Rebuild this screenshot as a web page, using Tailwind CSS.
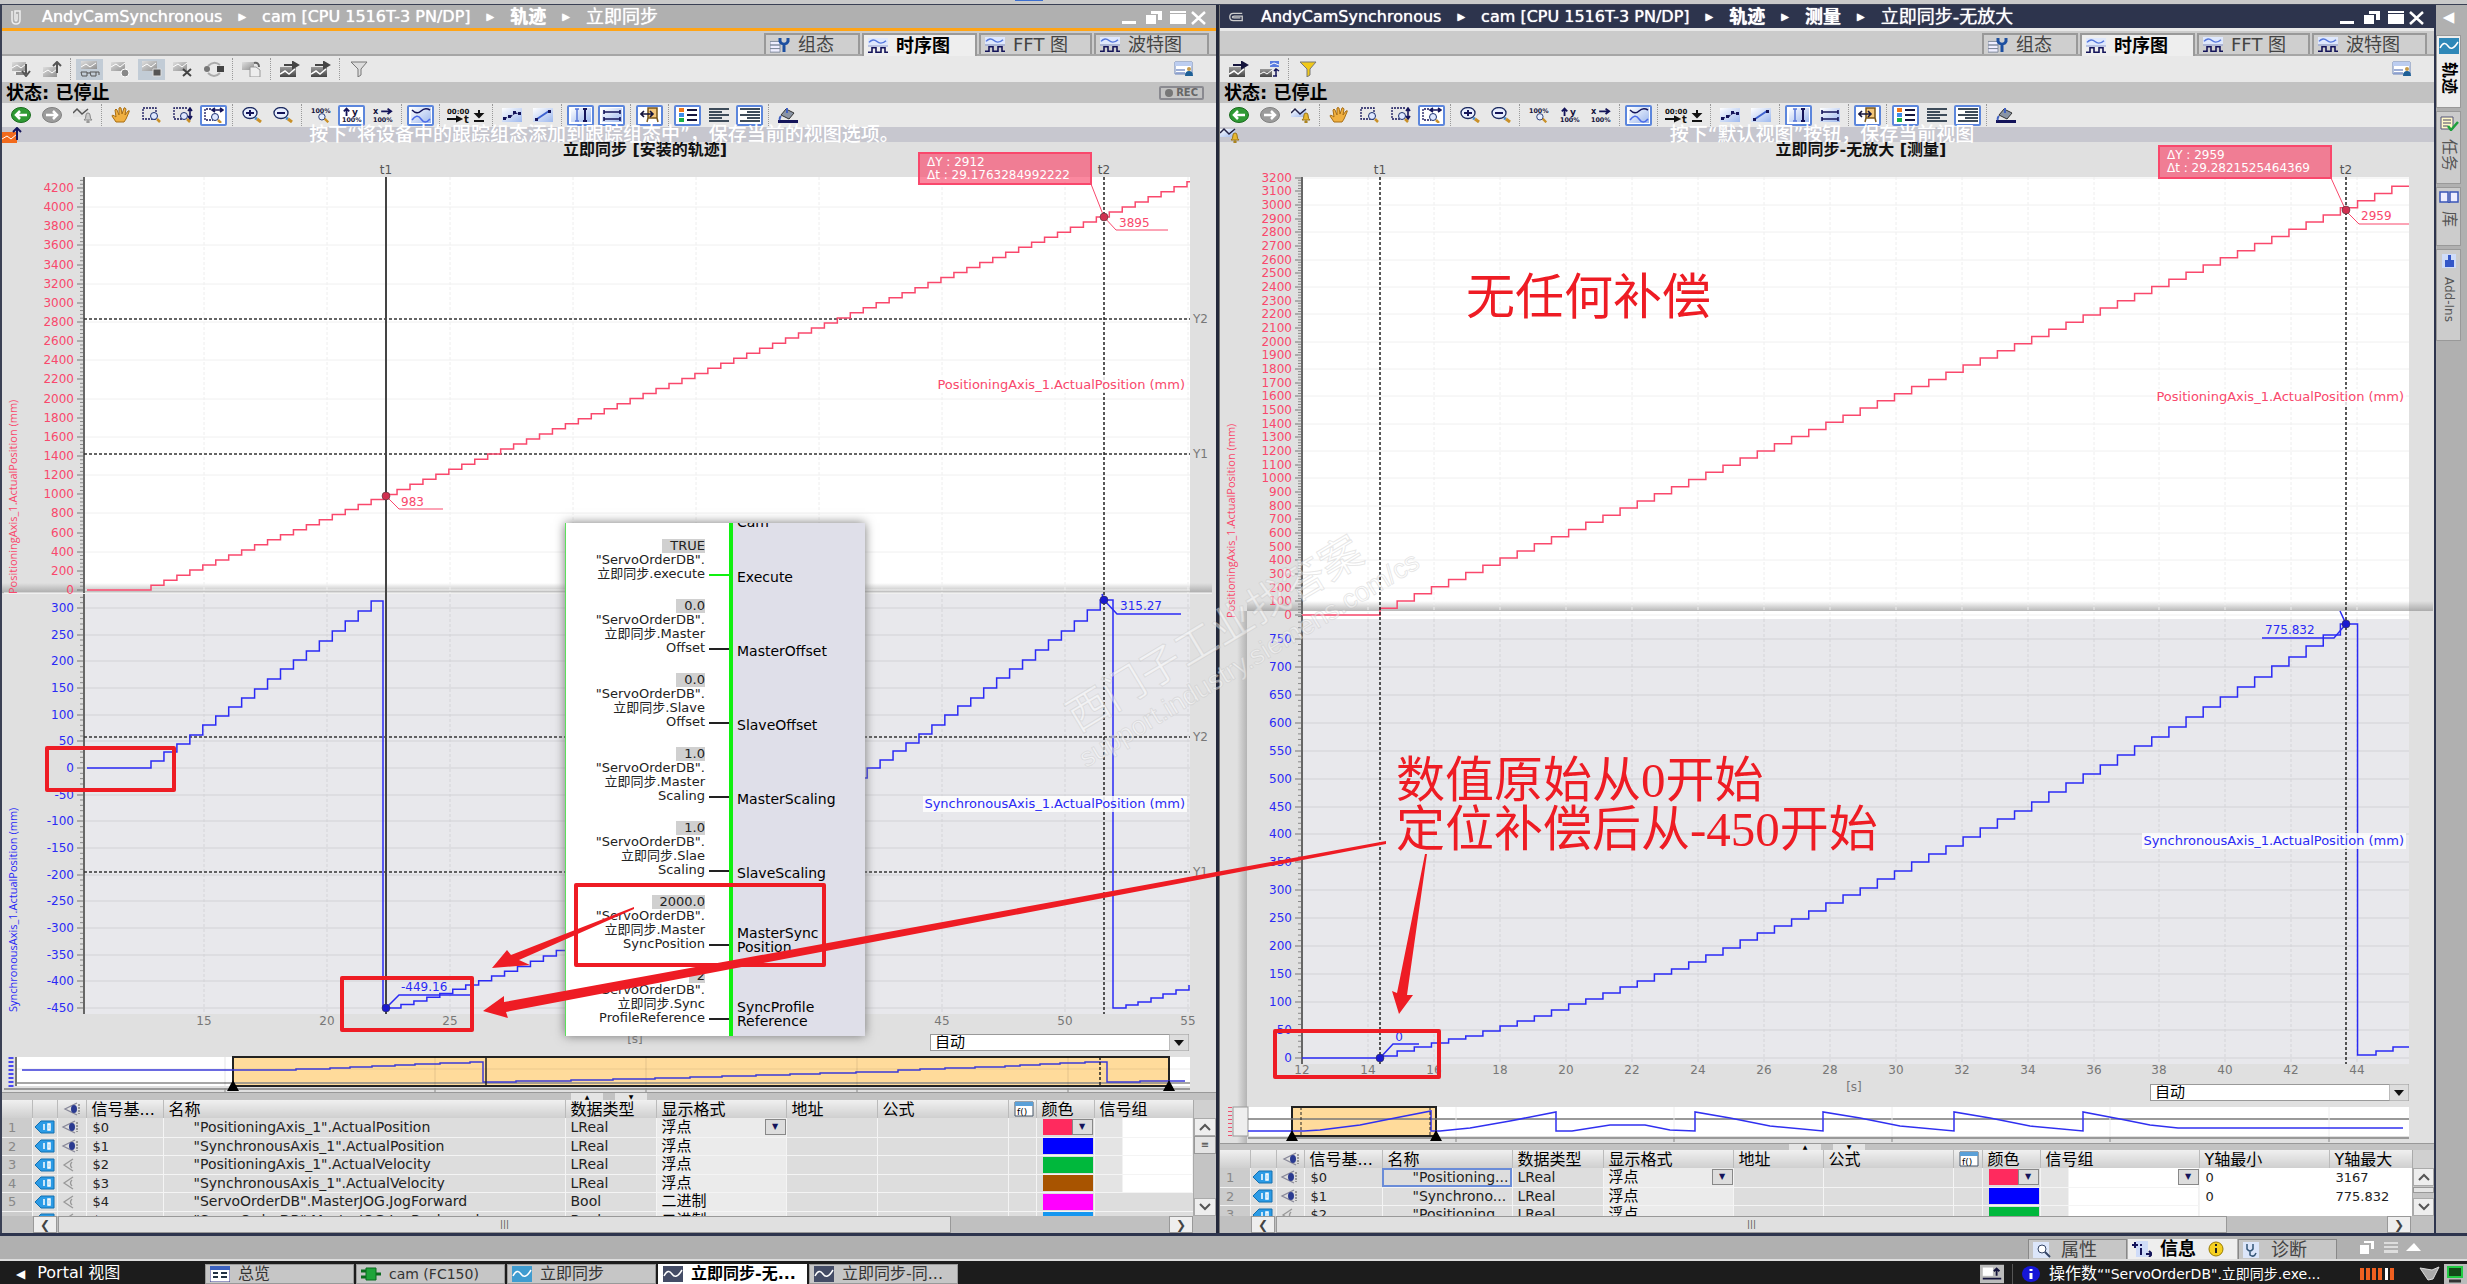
<!DOCTYPE html>
<html lang="zh-CN">
<head>
    <meta charset="UTF-8">
    <meta name="viewport" content="width=device-width, initial-scale=1.0">
    <title>立即同步 - 轨迹</title>
    <script src="https://cdn.jsdelivr.net/npm/@tailwindcss/browser@4"></script>
</head>
<body class="relative bg-[#b0b0b0] font-['DejaVu_Sans','Noto_Sans_CJK_SC',sans-serif] text-xs text-[#222] overflow-x-hidden">

    <!-- Icons -->
    <svg class="absolute w-0 h-0">
        <defs>
            <linearGradient id="gBlue" x1="0" y1="0" x2="1" y2="1"><stop offset="0" stop-color="#fff"/><stop offset="1" stop-color="#9db8ee"/></linearGradient>
            <linearGradient id="gGray" x1="0" y1="0" x2="1" y2="1"><stop offset="0" stop-color="#dedede"/><stop offset="1" stop-color="#909090"/></linearGradient>
            <linearGradient id="gDark" x1="0" y1="0" x2="0" y2="1"><stop offset="0" stop-color="#999"/><stop offset="1" stop-color="#444"/></linearGradient>
            <linearGradient id="gShade" x1="0" y1="0" x2="0" y2="1"><stop offset="0" stop-color="#888" stop-opacity="0"/><stop offset="1" stop-color="#888" stop-opacity=".6"/></linearGradient>
            <linearGradient id="gShadeX" x1="0" y1="0" x2="1" y2="0"><stop offset="0" stop-color="#888" stop-opacity="0"/><stop offset="1" stop-color="#888" stop-opacity=".5"/></linearGradient>
        </defs>
        <symbol id="i-down" viewBox="0 0 20 16" preserveAspectRatio="none"><path d="M1 1h14v9H1z" fill="url(#gGray)"/><path d="M1 7l5-3 4 3 5-4M3 12h10" stroke="#fff" fill="none"/><path d="M5 11h9v3H5z" fill="#888"/><path d="M15 3v10M11 10l4 5 4-5" stroke="#555" stroke-width="2" fill="none"/></symbol>
        <symbol id="i-up" viewBox="0 0 20 16" preserveAspectRatio="none"><path d="M1 6h14v10H1z" fill="url(#gGray)"/><path d="M1 12l5-3 4 3 5-4" stroke="#fff" fill="none"/><path d="M15 12V2M11 5l4-4 4 4" stroke="#555" stroke-width="2" fill="none"/></symbol>
        <symbol id="i-glasses" viewBox="0 0 20 16" preserveAspectRatio="none"><path d="M1 0h16v8H1z" fill="url(#gGray)"/><path d="M1 6l5-3 4 3 6-4" stroke="#fff" fill="none"/><path d="M1 11h6v4H2zM10 11h6v4h-5zM7 12h3M16 11h3v3" stroke="#555" fill="none"/></symbol>
        <symbol id="i-rec" viewBox="0 0 20 16" preserveAspectRatio="none"><path d="M0 1h14v9H0z" fill="url(#gGray)"/><path d="M0 6l5-3 4 3 5-4" stroke="#fff" fill="none"/><circle cx="14" cy="12" r="4" fill="#888" stroke="#fff"/></symbol>
        <symbol id="i-stop" viewBox="0 0 20 16" preserveAspectRatio="none"><path d="M0 0h15v10H0z" fill="url(#gGray)"/><path d="M0 6l5-3 4 3 5-4" stroke="#fff" fill="none"/><path d="M11 8h8v7h-8z" fill="#555" stroke="#ddd"/></symbol>
        <symbol id="i-del" viewBox="0 0 20 16" preserveAspectRatio="none"><path d="M0 1h14v9H0z" fill="url(#gGray)"/><path d="M0 6l5-3 4 3 5-4" stroke="#fff" fill="none"/><path d="M10 8l8 7M18 8l-8 7" stroke="#444" stroke-width="2"/></symbol>
        <symbol id="i-loop" viewBox="0 0 20 16" preserveAspectRatio="none"><path d="M4 5q6-6 12-1M16 12q-6 6-12 0" stroke="#aaa" stroke-width="2" fill="none"/><circle cx="3" cy="8" r="3" fill="#777"/><path d="M13 5h7v6h-7z" fill="#444"/></symbol>
        <symbol id="i-copy" viewBox="0 0 20 16" preserveAspectRatio="none"><path d="M0 1h12v8H0z" fill="url(#gGray)"/><path d="M8 6h6l4 3v7H8z" fill="#eee" stroke="#999"/><path d="M12 2q5-1 5 4" stroke="#666" stroke-width="2" fill="none"/></symbol>
        <symbol id="i-send" viewBox="0 0 20 16" preserveAspectRatio="none"><path d="M0 6h16v10H0z" fill="url(#gDark)"/><path d="M0 13l5-3 4 3 6-5" stroke="#fff" stroke-width="1.500" fill="none"/><path d="M4 4h11M13 1l5 3-5 3z" stroke="currentColor" stroke-width="2" fill="currentColor"/></symbol>
        <symbol id="i-swap" viewBox="0 0 20 16" preserveAspectRatio="none"><path d="M10 0h9v6h-9z" fill="#5a7be0"/><path d="M10 4l4-2 5 2" stroke="#fff" fill="none"/><path d="M0 8h12v8H0z" fill="url(#gDark)"/><path d="M0 13l4-2 3 2 5-4" stroke="#fff" fill="none"/><path d="M16 8v7M13 15h4M14 10l2-2 3 2" stroke="#14145a" stroke-width="1.500" fill="none"/></symbol>
        <symbol id="i-funnel" viewBox="0 0 20 16" preserveAspectRatio="none"><path d="M2 1h16l-6 7v6l-3 2V8z" fill="currentColor" stroke="#777"/></symbol>
        <symbol id="i-view" viewBox="0 0 20 16" preserveAspectRatio="none"><path d="M1 1h17v12H1z" fill="#fff" stroke="#6a84b8"/><path d="M1 1h17v4H1z" fill="#bccdf0"/><path d="M2 9h9M2 12h9" stroke="#7d94c9" stroke-width="1.500"/><circle cx="15" cy="8" r="2" fill="#c59a4a"/><path d="M11 15q0-5 4-5t4 5z" fill="#1e5f96"/></symbol>
        <symbol id="i-back" viewBox="0 0 20 16" preserveAspectRatio="none"><ellipse cx="10" cy="8" rx="9.500" ry="7.500" fill="#2f9a34" stroke="#1a6b1e"/><path d="M16 8H6M9 4L5 8l4 4" stroke="#fff" stroke-width="2.500" fill="none"/></symbol>
        <symbol id="i-fwd" viewBox="0 0 20 16" preserveAspectRatio="none"><ellipse cx="10" cy="8" rx="9.500" ry="7.500" fill="#9c9c9c" stroke="#808080"/><path d="M4 8h10M11 4l4 4-4 4" stroke="#fff" stroke-width="2.500" fill="none"/></symbol>
        <symbol id="i-bell" viewBox="0 0 20 16" preserveAspectRatio="none"><path d="M0 2h15v8H0z" fill="url(#gBlue)"/><path d="M0 6l4-4 5 5 6-5" stroke="#224" stroke-width="1.500" fill="none"/><path d="M11 13q2-1 2-5 0-2 2-2t2 2q0 4 2 5zM14 14h2v2h-2z" fill="#e8b830" stroke="#9a7416"/></symbol>
        <symbol id="i-bellg" viewBox="0 0 20 16" preserveAspectRatio="none"><path d="M0 2h15v8H0z" fill="#e2e2e2"/><path d="M0 6l4-4 5 5 6-5" stroke="#555" stroke-width="1.500" fill="none"/><path d="M11 13q2-1 2-5 0-2 2-2t2 2q0 4 2 5zM14 14h2v2h-2z" fill="#ccc" stroke="#888"/></symbol>
        <symbol id="i-hand" viewBox="0 0 20 16" preserveAspectRatio="none"><path d="M5 15L1 9q0-2 4 1L4 3q1-2 2 0l2 5V1q1-1 2 0l1 6 2-6q1-1 2 1l-1 6 3-4q2-1 1 1l-3 7-2 3z" fill="#f0b040" stroke="#a86e14"/></symbol>
        <symbol id="i-zsel" viewBox="0 0 20 16" preserveAspectRatio="none"><path d="M1 1h13v11H1z" fill="none" stroke="#14145a" stroke-width="1.300" stroke-dasharray="2 1"/><circle cx="12" cy="9" r="3.500" fill="#dfe8ff" stroke="#1c3070"/><path d="M15 12l3 3" stroke="#c99028" stroke-width="2.500"/></symbol>
        <symbol id="i-zy" viewBox="0 0 20 16" preserveAspectRatio="none"><path d="M14 1H1v11h9" fill="none" stroke="#14145a" stroke-width="1.300" stroke-dasharray="2 1"/><path d="M17 2v9M15 4l2-3 2 3M15 9l2 3 2-3" stroke="#14145a" stroke-width="1.600" fill="none"/><circle cx="11" cy="9" r="3.500" fill="#dfe8ff" stroke="#1c3070"/><path d="M14 12l3 3" stroke="#c99028" stroke-width="2.500"/></symbol>
        <symbol id="i-zx" viewBox="0 0 20 16" preserveAspectRatio="none"><path d="M7 2H1v11h8" fill="none" stroke="#14145a" stroke-width="1.300" stroke-dasharray="2 1"/><path d="M9 3h9M11 1L8 3l3 2M16 1l3 2-3 2" stroke="#14145a" stroke-width="1.600" fill="none"/><circle cx="11" cy="10" r="3.500" fill="#dfe8ff" stroke="#1c3070"/><path d="M14 13l3 3" stroke="#c99028" stroke-width="2.500"/></symbol>
        <symbol id="i-zin" viewBox="0 0 20 16" preserveAspectRatio="none"><ellipse cx="8" cy="6" rx="7" ry="5.500" fill="#e8efff" stroke="#1c2a60" stroke-width="1.300"/><path d="M4 6h8M8 3v6" stroke="#14145a" stroke-width="2"/><path d="M13 11l2 1" stroke="#4c8fd0" stroke-width="3"/><path d="M15 12l4 3" stroke="#c99028" stroke-width="3"/></symbol>
        <symbol id="i-zout" viewBox="0 0 20 16" preserveAspectRatio="none"><ellipse cx="8" cy="6" rx="7" ry="5.500" fill="#e8efff" stroke="#1c2a60" stroke-width="1.300"/><path d="M4 6h8" stroke="#14145a" stroke-width="2"/><path d="M13 11l2 1" stroke="#4c8fd0" stroke-width="3"/><path d="M15 12l4 3" stroke="#c99028" stroke-width="3"/></symbol>
        <symbol id="i-z100" viewBox="0 0 22 16"><text x="0" y="6" font-size="7" font-weight="bold" fill="#14143c">100%</text><circle cx="12" cy="10" r="3.500" fill="#e8efff" stroke="#1c3070"/><path d="M15 12l4 4" stroke="#c99028" stroke-width="2.500"/></symbol>
        <symbol id="i-y100" viewBox="0 0 22 16"><path d="M5 9V1M2 4l3-3 3 3" stroke="#14145a" stroke-width="2" fill="none"/><text x="11" y="8" font-size="10" font-weight="bold" fill="#14143c">y</text><text x="0" y="16" font-size="7" font-weight="bold" fill="#14143c">100%</text></symbol>
        <symbol id="i-x100" viewBox="0 0 22 16"><path d="M9 4h10M16 1l4 3-4 3" stroke="#14145a" stroke-width="2" fill="none"/><text x="0" y="7" font-size="9" font-weight="bold" fill="#14143c">x</text><text x="0" y="16" font-size="7" font-weight="bold" fill="#14143c">100%</text></symbol>
        <symbol id="i-wave" viewBox="0 0 20 16" preserveAspectRatio="none"><path d="M0 0h20v16H0z" fill="url(#gBlue)"/><path d="M1 3q5 5 9 1t9-1" stroke="#14145a" stroke-width="1.500" fill="none"/><path d="M1 13q5-7 9-1t9 0" stroke="#4a6ae8" stroke-width="1.500" fill="none"/></symbol>
        <symbol id="i-time" viewBox="0 0 40 16"><text x="1" y="7" font-size="7" font-weight="bold" fill="#111">00:00</text><path d="M1 12h12M11 10l4 2-4 2z" stroke="#111" stroke-width="2"/><text x="18" y="16" font-size="10" font-weight="bold" fill="#111">t</text><path d="M33 3v5M30 7h6l-3 3zM28 14h10" stroke="#111" stroke-width="2"/></symbol>
        <symbol id="i-dots" viewBox="0 0 20 16" preserveAspectRatio="none"><path d="M0 1h20v14H0z" fill="url(#gBlue)"/><path d="M3 11l5-1 5-4 5 1" stroke="#14145a" stroke-width="1.200" fill="none" stroke-dasharray="2 1"/><path d="M1 10h3v3H1zM6 8h3v3H6zM11 4h3v3h-3zM16 5h3v3h-3z" fill="#14145a"/></symbol>
        <symbol id="i-line" viewBox="0 0 20 16" preserveAspectRatio="none"><path d="M0 1h20v14H0z" fill="url(#gBlue)"/><path d="M4 12l12-8" stroke="#3d62d0" stroke-width="2"/><path d="M2 11h3v3H2zM15 3h3v3h-3z" fill="#14145a"/></symbol>
        <symbol id="i-vcur" viewBox="0 0 20 16" preserveAspectRatio="none"><path d="M0 1h20v14H0z" fill="url(#gBlue)"/><path d="M6 2v12M4 2h4M4 14h4" stroke="#5a78d8" stroke-width="1.500"/><path d="M14 2v12M12 2h4M12 14h4" stroke="#14145a" stroke-width="2"/></symbol>
        <symbol id="i-hcur" viewBox="0 0 20 16" preserveAspectRatio="none"><path d="M0 1h20v14H0z" fill="url(#gBlue)"/><path d="M2 5h16M2 3v4M18 3v4M2 12h16M2 10v4M18 10v4" stroke="#14145a" stroke-width="1.600"/></symbol>
        <symbol id="i-fit" viewBox="0 0 20 16" preserveAspectRatio="none"><path d="M8 1h9v10H8zM8 11l-1 4M17 11l1 4" fill="#f3c67a" stroke="#7a5518" stroke-width="1.500"/><path d="M1 7h12M4 4L1 7l3 3M10 4l3 3-3 3" stroke="#14143c" stroke-width="1.600" fill="none"/></symbol>
        <symbol id="i-legend" viewBox="0 0 20 16" preserveAspectRatio="none"><path d="M1 1h5v4H1z" fill="#f07818"/><path d="M1 6h5v4H1z" fill="#3c8ce8"/><path d="M1 11h5v4H1z" fill="#18b048"/><path d="M9 3h10M9 8h10M9 13h10" stroke="#14143c" stroke-width="2"/></symbol>
        <symbol id="i-left" viewBox="0 0 20 16" preserveAspectRatio="none"><path d="M0 2h20M0 5h13M0 8h20M0 11h13M0 14h20" stroke="#3e4c5a" stroke-width="2"/></symbol>
        <symbol id="i-right" viewBox="0 0 20 16" preserveAspectRatio="none"><path d="M0 2h20M7 5h13M0 8h20M7 11h13M0 14h20" stroke="#3e4c5a" stroke-width="2"/></symbol>
        <symbol id="i-fill" viewBox="0 0 20 16" preserveAspectRatio="none"><path d="M0 13h20v3H0z" fill="#14145a"/><path d="M8 2l8 4-5 6-8-4z" fill="#8a94a4" stroke="#333"/><path d="M3 9q-2 2-1 4M9 1v5" stroke="#4060c0" stroke-width="2" fill="none"/></symbol>
        <symbol id="i-graph" viewBox="0 0 20 18" preserveAspectRatio="none"><path d="M0 0h20v8H0z" fill="#dfe8fc"/><path d="M1 5q4-5 8-1t9-1" stroke="#5577dd" stroke-width="1.500" fill="none"/><path d="M0 9h20" stroke="#8296d8"/><path d="M0 16h4v-5h4v5h5v-5h4v5h3" stroke="#14145a" stroke-width="1.600" fill="none"/></symbol>
        <symbol id="i-tool" viewBox="0 0 20 18" preserveAspectRatio="none"><path d="M0 5h10v4H0zM0 9h10v4H0zM0 13h10v4H0z" fill="#eef" stroke="#7f8a9c"/><path d="M10 1v4q1 3 4 3t4-3V1M14 7v10" stroke="#1d4fa0" stroke-width="3" fill="none"/></symbol>
        <symbol id="i-tag" viewBox="0 0 20 14" preserveAspectRatio="none"><path d="M0 7l6-6h13v12H6z" fill="#2b9be6" stroke="#1470b0"/><path d="M9 4v6M13 4h2v6h-2z" stroke="#fff" stroke-width="1.500" fill="none"/></symbol>
        <symbol id="i-eye" viewBox="0 0 20 14" preserveAspectRatio="none"><path d="M14 1L2 7l12 6" stroke="#889" stroke-width="1.300" fill="none"/><ellipse cx="11" cy="7" rx="3" ry="4" fill="currentColor"/><path d="M16 2v10" stroke="#555" stroke-dasharray="2 1"/></symbol>
        <symbol id="i-eyeg" viewBox="0 0 20 14" preserveAspectRatio="none"><path d="M12 1L3 7l9 6M11 4q-3 3 0 6" stroke="#999" stroke-width="1.300" fill="none"/></symbol>
        <symbol id="i-trace" viewBox="0 0 20 16" preserveAspectRatio="none"><path d="M0 0h20v16H0z" fill="currentColor"/><path d="M1 10q4-8 8-2t10-4" stroke="#fff" stroke-width="1.500" fill="none"/></symbol>
        <symbol id="i-win" viewBox="0 0 88 16"><g fill="#fff"><path d="M2 12h14v3H2z"/><path d="M26 6h10v9H26z"/><path d="M31 2h11v9h-4V5h-7z"/><path d="M50 2h16v2H50zM50 5h16v10H50z"/></g><path d="M72 3l13 12M85 3L72 15" stroke="#fff" stroke-width="2.500"/></symbol>
    </svg>

    <header class="h-1 bg-[#c9c9c9] pl-[1015px]"><div class="w-7 h-px bg-[#3c6fd0]"></div></header>

    <main class="grid grid-cols-[1216fr_4px_1214fr_33px] border-t border-[#3a4054] h-auto">

        <!-- Left editor: installed trace -->
        <section class="flex flex-col min-w-0 border-l-2 border-[#3a4054] bg-[#e0e0e0]">
            <div class="flex items-center h-[26px] bg-[#b0b0b0] border-b-3 border-[#ffa416] text-white text-[16px] leading-5 pl-2 pr-2">
                <svg class="w-3 h-4 mr-5" viewBox="0 0 12 16"><path d="M2 2v9q0 4 4 4t4-4V2H5v8q0 2 1 2t1-2V5" fill="none" stroke="#eee" stroke-width="1.500"/></svg>
                <span class="flex-1 flex items-center gap-[16px] [text-shadow:0_0_1px_#fff] whitespace-nowrap">AndyCamSynchronous <i class="not-italic text-[10px]">&#9654;</i> cam [CPU 1516T-3 PN/DP] <i class="not-italic text-[10px]">&#9654;</i> <b class="text-[18px]">轨迹</b> <i class="not-italic text-[10px]">&#9654;</i> <span class="text-[18px]">立即同步</span></span>
                <svg class="w-[88px] h-4"><use href="#i-win"/></svg>
            </div>
            <nav class="flex items-end justify-end gap-[2px] h-[25px] bg-[#cbcbcb] border-b-2 border-[#a6a6a6] pr-[7px] text-[18px] leading-5 text-[#444]" data-tabs></nav>
            <div class="flex items-center h-[26px] pl-[3px] pr-[17px] bg-[#e8e8e8]" data-bar="down up | *glasses rec *stop del loop | copy | send send | funnel >view"></div>
            <div class="flex items-center justify-between h-[21px] bg-[#c2c2c2] pl-1 pr-3 text-[18px] font-bold text-black leading-5">状态: 已停止
                <span class="flex items-center gap-[3px] h-[14px] px-1 border-2 border-[#8a8a90] rounded-xs text-[10px] text-[#666] leading-none"><i class="size-2 rounded-full bg-[#777]"></i>REC</span></div>
            <div class="flex items-center h-6 pl-[3px] bg-[#e8e8e8]" data-bar="back fwd bellg | hand zsel zy *zx | zin zout | z100 *y100 x100 | *wave | =time | dots line | *vcur *hcur | *fit | *legend left *right | fill"></div>
            <div class="flex h-[15px] bg-[#c7c7cf] text-[19px] leading-[15px] text-white font-medium">
                <svg class="w-5 h-4" viewBox="0 0 20 16"><path d="M0 5h15v11H0z" fill="#f26a1c"/><path d="M0 12l5-3 4 3 6-5" stroke="#fff" fill="none"/><path d="M15 13V2M11 5l4-4 4 4" stroke="#14145a" stroke-width="2" fill="none"/></svg>
                <p class="flex-1 pr-[30px] text-center whitespace-nowrap">按下“将设备中的跟踪组态添加到跟踪组态中”，保存当前的视图选项。</p>
            </div>
            <div class="relative">
                <svg id="chartL" class="block w-full h-auto" viewBox="2 142 1214 950"></svg>
                <label class="absolute right-[27px] bottom-[41px] w-[259px] h-[17px]"><span class="sr-only">时间轴</span>
                    <select class="appearance-none block w-full h-full bg-white border border-[#999] pl-1 text-[15px] leading-[15px] text-black"><option>自动</option></select>
                    <svg class="absolute right-0 top-0 w-5 h-full pointer-events-none" viewBox="0 0 20 17"><path d="M0 0h20v17H0z" fill="#ddd" stroke="#999"/><path d="M5 6h10l-5 6z" fill="#111"/></svg>
                </label>
                <!-- Function block call -->
                <div class="absolute left-[563px] top-[381px] w-[300px] h-[513px] flex overflow-hidden bg-white shadow-[0_0_10px_#777] border-l border-[#5be05b] leading-[14px]">
                    <div id="fbIn" class="w-[167px] pt-4 flex flex-col gap-[18px] border-r-4 border-[#10f010] text-[13px]"></div>
                    <div id="fbOut" class="relative flex-1 pl-1 pt-[19px] flex flex-col gap-[18px] bg-[#dfdfe9] text-[14px] text-black">
                        <span class="absolute -top-2 left-1">Cam</span>
                    </div>
                </div>
            </div>
            <div class="flex justify-center gap-3 h-2 bg-[#c2c2c2] border-t border-[#999] text-[6px] leading-[7px] text-center text-black"><i class="w-8 bg-[#e4e4e4] not-italic">&#9650;</i><i class="w-8 bg-[#e4e4e4] not-italic">&#9660;</i></div>
            <div class="flex h-[116px]">
                <div class="flex-1 overflow-hidden bg-[#ddd]"><table id="tblL" class="w-full table-fixed border-collapse"></table></div>
                <div class="w-[23px] bg-[#c4c4c4] flex flex-col text-center text-[#444] border-l border-[#aaa]">
                    <span class="h-[18px] bg-[#d0d0d0]"></span>
                    <button class="h-[18px] bg-[#eee] border border-[#aaa] flex items-center justify-center" aria-label="上"><svg class="w-3 h-2" viewBox="0 0 12 8"><path d="M1 7l5-5 5 5" stroke="#555" stroke-width="2" fill="none"/></svg></button>
                    <span class="h-[18px] bg-[#e4e4e4] border border-[#999] text-[10px] leading-4">&#8801;</span>
                    <button class="h-[18px] mt-auto bg-[#eee] border border-[#aaa] flex items-center justify-center" aria-label="下"><svg class="w-3 h-2" viewBox="0 0 12 8"><path d="M1 1l5 5 5-5" stroke="#555" stroke-width="2" fill="none"/></svg></button>
                </div>
            </div>
            <div class="flex h-[17px] bg-[#c0c0c0] pl-[31px] pr-[23px]">
                <button class="w-6 bg-[#eee] border border-[#999] leading-3 text-[#444]" aria-label="左">&#10094;</button>
                <span class="w-[77%] ml-px bg-[#e0e0e0] border border-[#999] text-center leading-[14px] text-[9px] text-[#555]">|||</span>
                <button class="w-6 ml-auto bg-[#eee] border border-[#999] leading-3 text-[#444]" aria-label="右">&#10095;</button>
            </div>
        </section>

        <div class="bg-[#23283a] border-r border-[#777]"></div>

        <!-- Right editor: measurement -->
        <section class="flex flex-col min-w-0 bg-[#e0e0e0]">
            <div class="flex items-center h-[26px] bg-[#2d344d] border-b-3 border-[#e8e8e8] text-white text-[16px] leading-5 pl-2 pr-2">
                <svg class="w-4 h-3 mr-[17px]" viewBox="0 0 18 12"><path d="M16 2H6Q2 2 2 6t4 4h10V5H7q-2 0-2 1t2 1h7" fill="none" stroke="#ccc" stroke-width="1.500"/></svg>
                <span class="flex-1 flex items-center gap-[16px] [text-shadow:0_0_1px_#fff] whitespace-nowrap">AndyCamSynchronous <i class="not-italic text-[10px]">&#9654;</i> cam [CPU 1516T-3 PN/DP] <i class="not-italic text-[10px]">&#9654;</i> <b class="text-[18px]">轨迹</b> <i class="not-italic text-[10px]">&#9654;</i> <b class="text-[18px]">测量</b> <i class="not-italic text-[10px]">&#9654;</i> <span class="text-[18px]">立即同步-无放大</span></span>
                <svg class="w-[88px] h-4"><use href="#i-win"/></svg>
            </div>
            <nav class="flex items-end justify-end gap-[2px] h-[25px] bg-[#cbcbcb] border-b-2 border-[#a6a6a6] pr-[7px] text-[18px] leading-5 text-[#444]" data-tabs></nav>
            <div class="flex items-center h-[26px] pl-[3px] pr-[17px] bg-[#e8e8e8]" data-bar="!send swap | ~funnel >view"></div>
            <div class="flex items-center h-[21px] bg-[#c2c2c2] pl-1 text-[18px] font-bold text-black leading-5">状态: 已停止</div>
            <div class="flex items-center h-6 pl-[3px] bg-[#e8e8e8]" data-bar="back fwd bell | hand zsel zy *zx | zin zout | z100 y100 x100 | *wave | =time | dots line | *vcur hcur | *fit | *legend left *right | fill"></div>
            <div class="flex h-[15px] bg-[#c7c7cf] text-[19px] leading-[15px] text-white font-medium">
                <svg class="w-5 h-4"><use href="#i-bell"/></svg>
                <p class="flex-1 pr-[30px] text-center whitespace-nowrap">按下“默认视图”按钮，保存当前视图</p>
            </div>
            <div class="relative">
                <svg id="chartR" class="block w-full h-auto" viewBox="1220 142 1214 1001"></svg>
                <label class="absolute right-[25px] bottom-[42px] w-[259px] h-[17px]"><span class="sr-only">时间轴</span>
                    <select class="appearance-none block w-full h-full bg-white border border-[#999] pl-1 text-[15px] leading-[15px] text-black"><option>自动</option></select>
                    <svg class="absolute right-0 top-0 w-5 h-full pointer-events-none" viewBox="0 0 20 17"><path d="M0 0h20v17H0z" fill="#ddd" stroke="#999"/><path d="M5 6h10l-5 6z" fill="#111"/></svg>
                </label>
            </div>
            <div class="flex justify-center gap-3 h-[7px] bg-[#c2c2c2] border-t border-[#999] text-[6px] leading-[6px] text-center text-black"><i class="w-8 bg-[#e4e4e4] not-italic">&#9650;</i><i class="w-8 bg-[#e4e4e4] not-italic">&#9660;</i></div>
            <div class="flex h-[66px]">
                <div class="flex-1 overflow-hidden bg-[#ddd]"><table id="tblR" class="w-full table-fixed border-collapse"></table></div>
                <div class="w-[22px] bg-[#c4c4c4] flex flex-col text-center border-l border-[#aaa]">
                    <span class="h-[18px] bg-[#d0d0d0]"></span>
                    <button class="h-[18px] bg-[#eee] border border-[#aaa] flex items-center justify-center" aria-label="上"><svg class="w-3 h-2" viewBox="0 0 12 8"><path d="M1 7l5-5 5 5" stroke="#555" stroke-width="2" fill="none"/></svg></button>
                    <span class="h-[6px] mt-px bg-[#e4e4e4] border border-[#999]"></span>
                    <button class="h-[18px] mt-auto bg-[#eee] border border-[#aaa] flex items-center justify-center" aria-label="下"><svg class="w-3 h-2" viewBox="0 0 12 8"><path d="M1 1l5 5 5-5" stroke="#555" stroke-width="2" fill="none"/></svg></button>
                </div>
            </div>
            <div class="flex h-[17px] bg-[#c0c0c0] pl-[31px] pr-[23px]">
                <button class="w-6 bg-[#eee] border border-[#999] leading-3 text-[#444]" aria-label="左">&#10094;</button>
                <span class="w-[82%] ml-px bg-[#e0e0e0] border border-[#999] text-center leading-[14px] text-[9px] text-[#555]">|||</span>
                <button class="w-6 ml-auto bg-[#eee] border border-[#999] leading-3 text-[#444]" aria-label="右">&#10095;</button>
            </div>
        </section>

        <!-- Task cards -->
        <aside class="flex flex-col gap-[3px] border-l-2 border-[#2d344d] bg-[#b0b0b0] pr-[6px] text-[#555]">
            <span class="h-[27px] text-white text-center text-[15px] leading-6">&#9664;</span>
            <button class="flex flex-col items-center gap-2 h-[73px] bg-[#eee] border border-[#999] pt-[2px] font-bold text-black"><svg class="w-5 h-4 text-[#2f88b8]"><use href="#i-trace"/></svg><span class="[writing-mode:vertical-rl] [text-orientation:sideways] text-[16px] leading-5">轨迹</span></button>
            <button class="flex flex-col items-center gap-2 h-[73px] bg-[#ccc] border border-[#999] pt-[3px]"><svg class="w-5 h-4" viewBox="0 0 20 16"><path d="M2 2h12v12H2z" fill="#fff8c8" stroke="#557"/><path d="M4 5h8M4 8h8M4 11h5" stroke="#446"/><path d="M9 11l3 4 7-8" stroke="#1ea03c" stroke-width="2.500" fill="none"/></svg><span class="[writing-mode:vertical-rl] [text-orientation:sideways] text-[16px] leading-5">任务</span></button>
            <button class="flex flex-col items-center gap-2 h-[59px] bg-[#ccc] border border-[#999] pt-[3px]"><svg class="w-5 h-3" viewBox="0 0 20 12"><path d="M1 1h8v10H1zM11 1h8v10h-8zM9 11l1 1 1-1" fill="#eef" stroke="#3a55b8" stroke-width="1.500"/></svg><span class="[writing-mode:vertical-rl] [text-orientation:sideways] text-[16px] leading-5">库</span></button>
            <button class="flex flex-col items-center gap-2 h-[92px] bg-[#ccc] border border-[#999] pt-[3px] font-medium"><svg class="w-4 h-4" viewBox="0 0 16 16"><path d="M1 1h14v14H1z" fill="#cfdcf8"/><path d="M4 7h9v7H4zM7 2h3v5H7z" fill="#3457c8"/></svg><span class="[writing-mode:vertical-rl] text-[12px] leading-5">Add-Ins</span></button>
        </aside>
    </main>

    <!-- Inspector bar -->
    <div class="flex justify-between h-[28px] border-t-3 border-[#2d344d] border-b-2 border-b-[#ddd] bg-[#b0b0b0]">
        <span></span>
        <nav class="flex items-end gap-px pr-[45px] text-[18px] leading-5 text-[#444]">
            <button class="flex items-center gap-2 w-[99px] h-5 pl-1 bg-[#c6c6c6] border border-b-0 border-[#888]"><svg class="w-5 h-4" viewBox="0 0 20 16"><path d="M0 0h16v16H0z" fill="#dce6fa"/><circle cx="9" cy="7" r="4" fill="#fff" stroke="#346"/><path d="M12 10l5 5" stroke="#346" stroke-width="2"/></svg>属性</button>
            <button class="flex items-center gap-2 w-[109px] h-5 pl-1 bg-[#eee] font-bold text-black"><svg class="w-5 h-4" viewBox="0 0 20 16"><path d="M4 0h12v16H4z" fill="#cfdcf8"/><path d="M0 4h6M3 1v6M9 7v7M9 3v2M14 13h6M17 10l3 3-3 3" stroke="#14145a" stroke-width="2" fill="none"/></svg>信息<svg class="w-4 h-4 ml-1" viewBox="0 0 16 16"><circle cx="8" cy="8" r="7" fill="#f5d020" stroke="#987c00"/><path d="M8 7v5M8 3v2" stroke="#222" stroke-width="2"/></svg></button>
            <button class="flex items-center gap-3 w-[99px] h-5 pl-1 bg-[#c6c6c6] border border-b-0 border-[#888]"><svg class="w-4 h-4" viewBox="0 0 16 16"><path d="M0 0h16v16H0z" fill="#dce6fa"/><path d="M4 2v5q3 4 6 0V2M7 9v4q4 3 6-2" stroke="#357" stroke-width="1.500" fill="none"/></svg>诊断</button>
            <svg class="w-[64px] h-4 ml-5 mb-1" viewBox="0 0 64 16"><path d="M2 6h9v9H2zM6 2h10v8h-3V4H6z" fill="#fff"/><path d="M26 3h14v2H26zM26 7h14v2H26zM26 11h14v3H26z" fill="#ddd"/><path d="M48 12h15l-7-8z" fill="#fff"/></svg>
        </nav>
    </div>

    <!-- Portal bar -->
    <footer class="flex items-end h-[23px] bg-[#1c1c1c] text-[14px] leading-5 text-[#333]">
        <a href="#" class="w-[205px] pl-4 text-white text-[16px] whitespace-nowrap"><span class="text-[12px] mr-3">&#9664;</span>Portal 视图</a>
        <div class="flex gap-[2px]">
            <button class="flex items-center gap-2 w-[149px] h-5 px-1 bg-[#c6c6c6] border border-[#999] text-[16px]"><svg class="w-5 h-4" viewBox="0 0 20 16"><path d="M0 0h20v16H0z" fill="#fff" stroke="#338"/><path d="M0 0h20v4H0z" fill="#3c62c0"/><path d="M3 7h5M3 11h5M11 7h6M11 11h6" stroke="#234" stroke-width="2"/></svg>总览</button>
            <button class="flex items-center gap-2 w-[149px] h-5 px-1 bg-[#c6c6c6] border border-[#999] text-[14px]"><svg class="w-5 h-4" viewBox="0 0 20 16"><path d="M5 2h10v12H5z" fill="#1fa53a" stroke="#0b6b1e"/><path d="M0 5h5M0 11h5M15 8h5" stroke="#0b6b1e" stroke-width="3"/></svg>cam (FC150)</button>
            <button class="flex items-center gap-2 w-[149px] h-5 px-1 bg-[#c6c6c6] border border-[#999] text-[16px]"><svg class="w-5 h-4 text-[#3f9cd0]"><use href="#i-trace"/></svg>立即同步</button>
            <button class="flex items-center gap-2 w-[149px] h-5 px-1 bg-white border border-white text-[16px] font-bold text-black whitespace-nowrap"><svg class="w-5 h-4 text-[#444c66]"><use href="#i-trace"/></svg>立即同步-无...</button>
            <button class="flex items-center gap-2 w-[149px] h-5 px-1 bg-[#c6c6c6] border border-[#999] text-[16px] whitespace-nowrap"><svg class="w-5 h-4 text-[#444c66]"><use href="#i-trace"/></svg>立即同步-同...</button>
        </div>
        <div class="ml-auto flex items-center gap-2 h-5 text-white">
            <svg class="w-6 h-5" viewBox="0 0 26 20"><path d="M0 0h26v20H0z" fill="#bbb"/><path d="M3 3h11v9H3z" fill="#fff"/><path d="M3 15h20M18 12V4M15 7l3-3 3 3" stroke="#14143c" stroke-width="2" fill="none"/></svg>
            <i class="w-px h-5 bg-[#555]"></i>
            <svg class="w-5 h-4" viewBox="0 0 20 16"><ellipse cx="10" cy="8" rx="9" ry="8" fill="#1616d8"/><path d="M10 7v6M10 3v2" stroke="#fff" stroke-width="3"/></svg>
            <span class="w-[302px] whitespace-nowrap"><span class="text-[16px]">操作数</span>“"ServoOrderDB".立即同步.exe...</span>
            <svg class="w-9 h-3" viewBox="0 0 36 12"><path d="M1 0h4v12H1zM7 0h4v12H7zM13 0h4v12h-4zM19 0h4v12h-4zM31 0h4v12h-4z" fill="#f06020"/><path d="M26 0h3v12h-3z" fill="#fff"/></svg>
            <svg class="w-12 h-5 ml-4" viewBox="0 0 48 20"><path d="M1 4l8 12 5-1 6-12-7 3z" fill="#aaa" stroke="#ddd"/><path d="M25 0h23v20H25z" fill="#bbb"/><path d="M29 3h14v10H29z" fill="#124a18" stroke="#22cc44" stroke-width="2"/><path d="M30 17h12" stroke="#333" stroke-width="3"/></svg>
        </div>
    </footer>

    <!-- Red notes over both editors -->
    <svg class="absolute top-0 left-0 w-full h-auto pointer-events-none" viewBox="0 0 2467 1284">
        <g fill="#fff" fill-opacity=".45" stroke="#bbb" stroke-opacity=".35" font-family="Noto Sans CJK SC">
            <text transform="translate(1078 733) rotate(-31)" font-size="42">西门子工业找答案</text>
            <text transform="translate(1086 768) rotate(-31)" font-size="27" font-family="Liberation Sans">support.industry.siemens.com/cs</text>
        </g>
        <g fill="none" stroke="#ee1c24" stroke-width="4" stroke-linejoin="round">
            <path d="M47 748h127v42H47zM342 978h130v52H342zM576 885h248v80H576zM1275 1031h164v46h-164z"/>
        </g>
        <g fill="#ee1c24">
            <path d="M634 907L511 955l-4-5-15 18 38-3-11-5 115-51z"/>
            <path d="M1386 841L504 1002v-6l-21 15 25 7-2-6L1386 844z"/>
            <path d="M1425 854l-28 139-5-2 7 23 14-19h-6l20-141z"/>
        </g>
        <g fill="#ee1c24" font-family="Liberation Serif, Noto Sans CJK SC" font-size="49">
            <text x="1466" y="314">无任何补偿</text>
            <text x="1396" y="797">数值原始从0开始</text>
            <text x="1396" y="846">定位补偿后从-450开始</text>
        </g>
    </svg>

    <script>
        const RED = "#f9486c", BLUE = "#2a2af5";

        // toolbars: "*" active, "|" separator, "=" wide, ">" pushed right
        document.querySelectorAll("[data-bar]").forEach(bar => {
            bar.innerHTML = bar.dataset.bar.split(" ").map(k => {
                if (k === "|") return '<i class="w-[7px] h-[22px] flex justify-center"><i class="border-l border-dotted border-[#999]"></i></i>';
                let box = "w-[27px] h-[21px] mx-[2px] flex items-center justify-center text-[#444]", ico = "w-5 h-4";
                if (k[0] === "*") box += bar.dataset.bar.startsWith("down") ? " bg-[#c2ccd6]" : " bg-white border-2 border-[#5c86dc] rounded-xs";
                if (k[0] === "!") box = box.replace("text-[#444]", "text-[#14143c]");
                if (k[0] === "~") box = box.replace("text-[#444]", "text-[#f0c818]");
                if (k === "funnel") box = box.replace("text-[#444]", "text-[#ddd]");
                if (k[0] === "=") { box = "w-[46px] h-[21px] flex items-center justify-center"; ico = "w-10 h-4"; }
                if (k[0] === ">") box += " ml-auto";
                const id = k.replace(/^[*!~=>]/, "");
                return `<button class="${box}" aria-label="${id}"><svg class="${ico} shrink-0"><use href="#i-${id}"/></svg></button>`;
            }).join("");
        });

        document.querySelectorAll("[data-tabs]").forEach(nav => {
            nav.innerHTML = [["组态", "w-[96px]"], ["时序图", "w-[115px]"], ["FFT 图", "w-[113px]"], ["波特图", "w-[115px]"]].map(([t, w], i) =>
                `<button class="${w} ${i === 1 ? "h-[23px] -mb-[2px] bg-[#eee] font-bold text-black" : "h-[21px] bg-[#cfcfcf]"} flex items-center gap-2 pl-1 border-2 border-b-0 border-[#999] whitespace-nowrap"><svg class="w-5 h-4"><use href="#i-${i ? "graph" : "tool"}"/></svg>${t}</button>`).join("");
        });

        // function block parameters
        const params = [
            ["TRUE", ["立即同步.execute"], ["Execute"]],
            ["0.0", ["立即同步.Master", "Offset"], ["MasterOffset"]],
            ["0.0", ["立即同步.Slave", "Offset"], ["SlaveOffset"]],
            ["1.0", ["立即同步.Master", "Scaling"], ["MasterScaling"]],
            ["1.0", ["立即同步.Slae", "Scaling"], ["SlaveScaling"]],
            ["2000.0", ["立即同步.Master", "SyncPosition"], ["MasterSync", "Position"]],
            ["2", ["立即同步.Sync", "ProfileReference"], ["SyncProfile", "Reference"]],
        ];
        params.forEach(([val, lines, out], i) => {
            fbIn.innerHTML += `<div class="flex items-end justify-end whitespace-nowrap"><div class="flex flex-col items-end ${i ? "h-14" : "h-[42px]"}"><span class="bg-[#d0d0d0] pl-2 h-[14px]">${val}</span><span>"ServoOrderDB".</span>${lines.map(l => `<span>${l}</span>`).join("")}</div><i class="w-5 ml-1 mb-[5px] h-[2px] ${i ? "bg-[#222]" : "bg-[#10f010]"}"></i></div>`;
            fbOut.innerHTML += `<div class="${i ? "h-14" : "h-[42px]"} flex flex-col justify-end">${out.map(l => `<span>${l}</span>`).join("")}</div>`;
        });

        // chart helpers
        const ln = (x1, y1, x2, y2, s, extra = "") => `<path d="M${x1} ${y1}L${x2} ${y2}" stroke="${s}" fill="none" ${extra}/>`;
        const tx = (x, y, t, c, a = "start", extra = "", size = 12) => `<text x="${x}" y="${y + 4}" fill="${c}" text-anchor="${a}" font-size="${size}" ${extra}>${t}</text>`;
        const rc = (x, y, w, h, f, extra = "") => `<rect x="${x}" y="${y}" width="${w}" height="${h}" fill="${f}" ${extra}/>`;
        const stepPath = (x, y0, w, ys, end) => { let d = `M${x[0]} ${y0}H${x[1]}`; ys.forEach((y, i) => d += `V${y}H${Math.min(x[1] + (i + 1) * w, end)}`); return d; };
        const curve = (d, c) => `<path d="${d}" stroke="${c}" stroke-width="1.500" fill="none"/>`;
        const axis = (x, top, bottom, max, min, step, yOf, c, right, gridStep, grid) => {
            let s = "";
            for (let v = min; v <= max; v += step) {
                const y = Math.round(yOf(v));
                if (v % gridStep === 0) s += ln(x, y, right, y, grid);
                s += tx(x - 10, y, v, c, "end") + ln(x - 7, y, x, y, "#777");
                for (let k = 1; k < 5; k++) { const m = yOf(v + step * k / 5); if (m > top) s += ln(x - 4, m, x, m, "#888"); }
            }
            return s + ln(x, top, x, bottom, "#666", 'stroke-width="2"');
        };
        const DASH = 'stroke-dasharray="3 2"', dot = (x, y, c) => `<circle cx="${x}" cy="${y}" r="4" fill="${c}" stroke="#333" stroke-opacity=".5"/>`;
        // series caption, right-aligned at x
        const caption = (x, y, w, t, c) => rc(x - w, y - 8, w + 2, 16, "#fff", 'fill-opacity=".8"') + tx(x, y, t, c, "end", "", 13);

        // left chart
        let L = rc(84, 177, 1106, 416, "#fff") + rc(2, 583, 1210, 10, "url(#gShade)") + rc(4, 593, 1208, 499, "#e0e0e0") + rc(84, 594, 1106, 420, "#e8e8ec") + ln(4, 593, 1212, 593, "#fff");
        for (let t = 15; t <= 55; t += 5) {
            const x = Math.round(204 + (t - 15) * 24.6);
            L += ln(x, 177, x, 593, "#eee", DASH) + ln(x, 594, x, 1014, "#d4d4d8", DASH) + tx(x, 1021, t, "#777", "middle");
        }
        L += axis(84, 177, 593, 4200, 0, 200, v => 590 - v * .0957, RED, 1190, 400, "#f0f0f0");
        L += axis(84, 594, 1014, 300, -450, 50, v => 768 - v * .5333, BLUE, 1190, 50, "#d2d2d6");
        [[319, "Y2"], [454, "Y1"], [737, "Y2"], [872, "Y1"]].forEach(([y, t]) => L += ln(84, y, 1190, y, "#333", 'stroke-width="1.500" stroke-dasharray="3 2"') + tx(1193, y, t, "#777"));
        const redL = Array.from({ length: 81 }, (_, i) => 590 - (50 + i * 52.7) * .0957);
        L += curve(stepPath([87, 151], 590, 12.95, redL, 1190), RED);
        const blueL1 = [761, 752, 744, 735, 725, 716, 707, 698, 689, 679, 669, 660, 651, 641, 631, 621, 611, 601];
        L += curve(stepPath([87, 151], 768, 12.95, blueL1, 383) + "V1008", BLUE);
        const blueL2 = Array.from({ length: 37 }, (_, i) => 1008 - 3.3 * i - .0858 * i * i).concat([768, 760, 751, 743, 734, 725, 715, 706, 698, 688, 678, 669, 660, 650, 640, 631, 621, 610, 600]);
        L += curve(stepPath([383, 388], 1008, 12.95, blueL2, 1113) + "V1008H1126V1005H1138V1002H1151V998H1163V994H1176V990H1189V985", BLUE);
        L += ln(386, 177, 386, 1014, "#444", 'stroke-width="2"') + ln(1104, 177, 1104, 1014, "#222", 'stroke-width="1.500" stroke-dasharray="3 2"');
        L += tx(386, 170, "t1", "#555", "middle") + tx(1104, 170, "t2", "#555", "middle") + tx(645, 151, "立即同步 [安装的轨迹]", "#111", "middle", 'font-weight="bold"', 16);
        L += rc(919, 153, 172, 31, RED, `fill-opacity=".65" stroke="${RED}" stroke-width="2"`) + tx(927, 162, "ΔY : 2912", "#fff") + tx(927, 175, "Δt : 29.1763284992222", "#fff");
        L += `<path d="M1091 184L1104 217L1116 230H1168M386 496L399 509H443" stroke="${RED}" fill="none"/><path d="M386 1008L399 995H471M1104 600L1117 614H1181M1102 594L1104 600" stroke="${BLUE}" fill="none" stroke-width="1.500"/>`;
        L += dot(386, 496, "#d03050") + dot(1104, 217, "#d03050") + dot(386, 1008, "#1a1ad0") + dot(1104, 600, "#1a1ad0");
        L += tx(401, 502, "983", RED) + tx(1119, 223, "3895", RED) + tx(401, 987, "-449.16", BLUE) + tx(1120, 606, "315.27", BLUE);
        L += caption(1185, 385, 248, "PositioningAxis_1.ActualPosition (mm)", RED) + caption(1185, 804, 262, "SynchronousAxis_1.ActualPosition (mm)", BLUE) + tx(635, 1039, "[s]", "#777", "middle");
        const vert = (x, y, t, c) => `<text transform="translate(${x} ${y}) rotate(-90)" fill="${c}" font-family="Open Sans" font-size="11">${t}</text>`;
        L += vert(17, 594, "PositioningAxis_1.ActualPosition (mm)", RED) + vert(17, 1012, "SynchronousAxis_1.ActualPosition (mm)", BLUE);
        // left overview
        L += rc(17, 1057, 1173, 29, "#fff") + rc(233, 1057, 936, 29, "#ffdb9b", 'stroke="#222" stroke-width="2"') + ln(17, 1083, 1190, 1083, "#888", 'stroke-width="1.500"') + ln(17, 1069, 1190, 1069, "#000", 'stroke-opacity=".08"');
        L += ln(16, 1057, 16, 1086, "#777", 'stroke-width="2"') + ln(11, 1057, 11, 1088, "#4a4af0", 'stroke-width="5" stroke-dasharray="2 2"') + ln(4, 1089, 1190, 1089, "#999", 'stroke-width="2"');
        [225, 435, 646, 857, 1068].forEach(x => L += ln(x, 1057, x, 1086, "#000", 'stroke-opacity=".1"') + ln(x, 1088, x, 1092, "#888"));
        L += curve("M22 1070H296V1069H330V1068H350V1067H372V1066H395V1065H415V1064H440V1063H470V1062H483V1082H516V1081H571V1080H613V1079H655V1078H690V1077H722V1076H756V1075H790V1074H820V1073H856V1072H898V1070H920V1069H945V1068H975V1067H1005V1066H1020V1065H1040V1064H1060V1063H1085V1062H1107V1082H1140V1081H1185", "#3a3ad8");
        L += ln(486, 1057, 486, 1086, "#222", 'stroke-width="1.500"') + ln(1100, 1057, 1100, 1086, "#222", 'stroke-width="1.500" stroke-dasharray="3 2"') + '<path d="M233 1080l6 11h-12zM1169 1080l6 11h-12z"/>';
        chartL.innerHTML = L;

        // right chart
        let R = rc(1302, 177, 1107, 437, "#fff") + rc(1247, 601, 1186, 10, "url(#gShade)") + rc(1237, 611, 10, 532, "url(#gShadeX)") + rc(1247, 611, 1187, 532, "#e0e0e0") + rc(1302, 611, 1107, 8, "#fff") + rc(1302, 619, 1107, 445, "#e8e8ec");
        for (let t = 12; t <= 44; t += 2) {
            const x = Math.round(1302 + (t - 12) * 32.98);
            R += ln(x, 177, x, 619, "#eee", DASH) + ln(x, 619, x, 1064, "#d4d4d8", DASH) + tx(x, 1070, t, "#777", "middle");
        }
        R += axis(1302, 177, 614, 3200, 0, 100, v => 615 - v * .1367, RED, 2409, 200, "#f0f0f0");
        R += axis(1302, 615, 1064, 750, 0, 50, v => 1058 - v * .5588, BLUE, 2409, 50, "#d2d2d6");
        const redR = Array.from({ length: 60 }, (_, i) => 615 - (50 + i * 52.3) * .1367);
        R += curve(stepPath([1302, 1380], 615, 17.15, redR, 2409), RED);
        const blueR = [1056, 1051, 1047, 1043, 1039, 1036, 1031, 1026, 1021, 1016, 1010, 1004, 999, 993, 987, 981, 974, 969, 962, 955, 948, 940, 933, 926, 919, 911, 903, 895, 888, 879, 871, 862, 854, 846, 837, 828, 819, 811, 802, 792, 783, 774, 765, 755, 746, 737, 727, 717, 707, 697, 687, 677, 666, 657, 646, 635, 624];
        R += curve(stepPath([1302, 1380], 1058, 17.15, blueR, 2358) + "V1055H2376V1051H2393V1047H2409", BLUE);
        R += [1380, 2346].map(x => ln(x, 177, x, 1064, "#222", 'stroke-width="1.500" stroke-dasharray="3 2"')).join("");
        R += tx(1380, 170, "t1", "#555", "middle") + tx(2346, 170, "t2", "#555", "middle") + tx(1861, 151, "立即同步-无放大 [测量]", "#111", "middle", 'font-weight="bold"', 16);
        R += rc(2159, 146, 172, 32, RED, `fill-opacity=".65" stroke="${RED}" stroke-width="2"`) + tx(2167, 155, "ΔY : 2959", "#fff") + tx(2167, 168, "Δt : 29.2821525464369", "#fff");
        R += `<path d="M2331 178L2346 211L2359 224H2409" stroke="${RED}" fill="none"/><path d="M1380 1058L1393 1044H1419M2262 638H2334L2346 624L2340 611" stroke="${BLUE}" stroke-width="1.500" fill="none"/>`;
        R += dot(2346, 210, "#d03050") + dot(1380, 1058, "#1a1ad0") + dot(2346, 624, "#1a1ad0");
        R += tx(2361, 216, "2959", RED) + tx(1399, 1037, "0", BLUE, "middle") + tx(2265, 630, "775.832", BLUE);
        R += caption(2404, 397, 248, "PositioningAxis_1.ActualPosition (mm)", RED) + caption(2404, 841, 262, "SynchronousAxis_1.ActualPosition (mm)", BLUE) + tx(1854, 1087, "[s]", "#777", "middle");
        R += vert(1235, 618, "PositioningAxis_1.ActualPosition (mm)", RED);
        // right overview
        R += rc(1248, 1107, 1161, 29, "#fff") + rc(1233, 1107, 15, 29, "#eee", 'stroke="#999"') + rc(1292, 1107, 144, 29, "#ffdb9b", 'stroke="#222" stroke-width="2"') + ln(1248, 1119, 2409, 1119, "#777", 'stroke-width="1.500"') + ln(1248, 1138, 2409, 1138, "#999", 'stroke-width="2"') + ln(1230, 1107, 1230, 1136, "#f05070", 'stroke-width="4" stroke-dasharray="1 3"');
        [1456, 1674, 1892, 2110, 2329].forEach(x => R += ln(x, 1107, x, 1136, "#eee") + ln(x, 1137, x, 1142, "#888"));
        R += curve("M1248 1131H1304L1320 1130L1360 1125L1400 1117L1431 1111V1131H1440L1470 1128L1510 1121L1556 1112V1131H1572L1610 1125H1645L1670 1130L1695 1131V1112L1730 1118L1770 1126L1823 1131V1112L1860 1118L1900 1126L1954 1131V1112L1990 1118L2030 1126L2083 1131V1112L2120 1119L2150 1125L2178 1128H2403", "#3030f0");
        R += [1301, 1430].map(x => ln(x, 1107, x, 1136, "#222", DASH)).join("") + '<path d="M1292 1130l6 11h-12zM1436 1130l6 11h-12z"/>';
        chartR.innerHTML = R;

        // signal tables
        const drop = '<button class="float-right w-[21px] h-4 bg-[#ddd] border border-[#888] text-[8px] leading-3 text-[#14145a]" aria-label="选择">&#9660;</button>';
        const fx = '<svg class="w-5 h-4" viewBox="0 0 20 16"><path d="M1 1h18v14H1z" fill="#fff" stroke="#456"/><path d="M1 1h18v4H1z" fill="#5aa0d8"/><text x="3" y="14" font-size="9">f()</text></svg>';
        const table = (el, widths, heads, rows, extra) => {
            const th = heads.map(h => `<th class="h-[18px] p-0 pl-[5px] text-left font-normal text-[16px] leading-[17px] text-black border-r border-[#bbb] whitespace-nowrap overflow-hidden bg-linear-to-b from-[#f0f0f0] to-[#cfcfcf]">${h}</th>`).join("");
            const body = rows.map(([id, name, type, fmt, color], i) => {
                const td = (c, h) => `<td class="p-0 border-r border-b border-[#f4f4f4] leading-[17px] whitespace-nowrap overflow-hidden ${c}">${h}</td>`;
                return `<tr class="h-[19px] even:h-[18px] text-[13px]">` + td("pl-[6px] bg-[#ccc] text-[#888]", i + 1)
                    + td("pl-[2px]", '<svg class="w-5 h-[14px]"><use href="#i-tag"/></svg>')
                    + td("pl-[3px]", `<svg class="w-5 h-[14px] text-[#2a3a90]"><use href="#i-${i < 2 ? "eye" : "eyeg"}"/></svg>`)
                    + td("pl-[6px]", id) + td(extra ? (i ? "pl-[30px] text-[14px]" : "pl-[30px] text-[14px] outline-2 -outline-offset-2 outline-[#6a8cd8]") : "pl-[30px] text-[14px]", name) + td("pl-[5px] text-[14px]", type)
                    + td("pl-[5px] bg-[#ebebeb] text-[15px] text-black", (i ? "" : drop) + fmt) + td("", "") + td("", "") + td("", "")
                    + td("", `<div class="h-4 ml-[6px] mr-px" style="background:${color}">${i ? "" : drop}</div>`)
                    + td(i < 4 || extra ? "bg-linear-to-r from-[#e4e4e4] from-[28px] to-white to-[28px]" : "", extra && !i ? drop : "")
                    + (extra ? td("pl-[6px] bg-white border-white", i < 2 ? "0" : "") + td("pl-[6px] bg-white border-white", extra[i] || "") : "") + "</tr>";
            }).join("");
            el.innerHTML = `<colgroup>${widths.map(w => `<col style="width:${w}px">`).join("")}</colgroup><thead><tr>${th}</tr></thead><tbody>${body}</tbody>`;
        };
        const eyeHead = '<svg class="w-5 h-[14px] text-[#2a3a90]"><use href="#i-eye"/></svg>';
        const heads = ["", "", eyeHead, "信号基...", "名称", "数据类型", "显示格式", "地址", "公式", fx, "颜色", "信号组"];
        table(tblL, [30, 25, 29, 77, 402, 91, 130, 91, 131, 28, 58, 99], heads, [
            ["$0", '"PositioningAxis_1".ActualPosition', "LReal", "浮点", "#ff2a5e"],
            ["$1", '"SynchronousAxis_1".ActualPosition', "LReal", "浮点", "#0000ff"],
            ["$2", '"PositioningAxis_1".ActualVelocity', "LReal", "浮点", "#00b83c"],
            ["$3", '"SynchronousAxis_1".ActualVelocity', "LReal", "浮点", "#a85400"],
            ["$4", '"ServoOrderDB".MasterJOG.JogForward', "Bool", "二进制", "#ff00ff"],
            ["$5", '"ServoOrderDB".MasterJOG.JogBackward', "Bool", "二进制", "#1496f0"],
        ]);
        table(tblR, [30, 26, 28, 78, 130, 91, 130, 90, 130, 29, 58, 159, 130, 83], [...heads, "Y轴最小", "Y轴最大"], [
            ["$0", '"Positioning...', "LReal", "浮点", "#ff2a5e"],
            ["$1", '"Synchrono...', "LReal", "浮点", "#0000ff"],
            ["$2", '"Positioning...', "LReal", "浮点", "#00b83c"],
        ], ["3167", "775.832"]);
    </script>
</body>
</html>
